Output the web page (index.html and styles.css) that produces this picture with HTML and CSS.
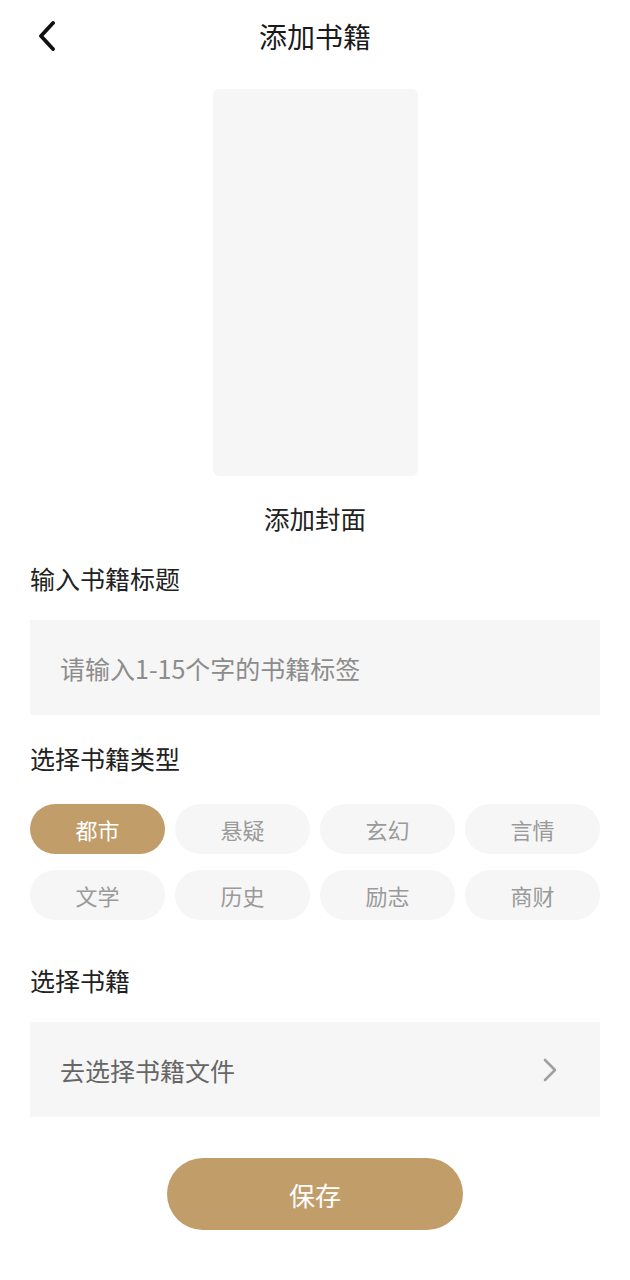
FILE: index.html
```html
<!DOCTYPE html>
<html>
<head>
  <meta charset="utf-8">
  <meta name="viewport" content="width=device-width, initial-scale=1">
  <title>添加书籍</title>
  <link rel="stylesheet" href="styles.css">
</head>
<body>
  <header class="topbar">
    <a class="back" href="#">
      <svg width="18" height="30" viewBox="0 0 18 30"><path d="M15 2 L3 15 L15 28" fill="none" stroke="#111" stroke-width="3.8" stroke-linecap="round" stroke-linejoin="round"/></svg>
    </a>
    <h1>添加书籍</h1>
  </header>

  <div class="cover">
    <div class="cover-box"></div>
    <p class="cover-label">添加封面</p>
  </div>

  <form class="book-form" action="#">
    <label class="field-label" for="title">输入书籍标题</label>
    <input class="field" type="text" id="title" name="title" placeholder="请输入1-15个字的书籍标签">

    <div class="field-label">选择书籍类型</div>
    <div class="tags">
      <span class="tag active">都市</span>
      <span class="tag">悬疑</span>
      <span class="tag">玄幻</span>
      <span class="tag">言情</span>
      <span class="tag">文学</span>
      <span class="tag">历史</span>
      <span class="tag">励志</span>
      <span class="tag">商财</span>
    </div>

    <div class="field-label label-file">选择书籍</div>
    <div class="field picker">
      <span>去选择书籍文件</span>
      <svg width="16" height="26" viewBox="0 0 16 26"><path d="M3 3 L13 13 L3 23" fill="none" stroke="#a0a0a0" stroke-width="2.6" stroke-linecap="round" stroke-linejoin="round"/></svg>
    </div>

    <button type="button" class="save">保存</button>
  </form>
</body>
</html>
```

FILE: styles.css
```css
body {
  margin: 0;
  padding: 0 30px;
  background: #fff;
  color: #222;
  font-family: "Noto Sans CJK SC", "Noto Sans", sans-serif;
}
.topbar {
  position: relative;
  height: 74px;
  display: flex;
  align-items: center;
  justify-content: center;
}
.topbar h1 {
  margin: 0 0 3px;
  font-size: 28px;
  font-weight: 400;
  line-height: 36px;
  color: #1a1a1a;
}
.back {
  position: absolute;
  left: 8px;
  top: 21px;
  display: block;
  width: 18px;
  height: 30px;
}
.back svg {
  display: block;
}
.cover {
  display: flex;
  flex-direction: column;
  align-items: center;
}
.cover-box {
  margin-top: 15px;
  width: 205px;
  height: 387px;
  background: #f6f6f6;
  border-radius: 6px;
}
.cover-label {
  margin: 25px 0 0;
  font-size: 25.5px;
  line-height: 34px;
}
.book-form {
  display: flex;
  flex-direction: column;
}
.field-label {
  display: block;
  margin-top: 26px;
  font-size: 25px;
  line-height: 34px;
  color: #222;
}
.field {
  margin-top: 25px;
  height: 95px;
  box-sizing: border-box;
  padding: 0 30px;
  border: none;
  background: #f6f6f6;
  font-family: inherit;
  font-size: 25px;
  color: #333;
  outline: none;
}
.field::placeholder {
  color: #8c8c8c;
}
.tags {
  margin-top: 29px;
  display: grid;
  grid-template-columns: repeat(4, 1fr);
  grid-auto-rows: 50px;
  column-gap: 10px;
  row-gap: 16px;
}
.tag {
  display: flex;
  align-items: center;
  justify-content: center;
  border-radius: 25px;
  background: #f6f6f6;
  color: #9a9a9a;
  font-size: 22px;
}
.tag.active {
  background: #c19d6a;
  color: #fff;
}
.label-file {
  margin-top: 43px;
}
.picker {
  display: flex;
  align-items: center;
  justify-content: space-between;
  padding-right: 42px;
  color: #666;
}
.picker svg {
  display: block;
}
.save {
  margin: 41px auto 0;
  width: 296px;
  height: 72px;
  border: none;
  border-radius: 36px;
  background: #c19d6a;
  color: #fff;
  font-family: inherit;
  font-size: 26px;
  cursor: pointer;
}
```
